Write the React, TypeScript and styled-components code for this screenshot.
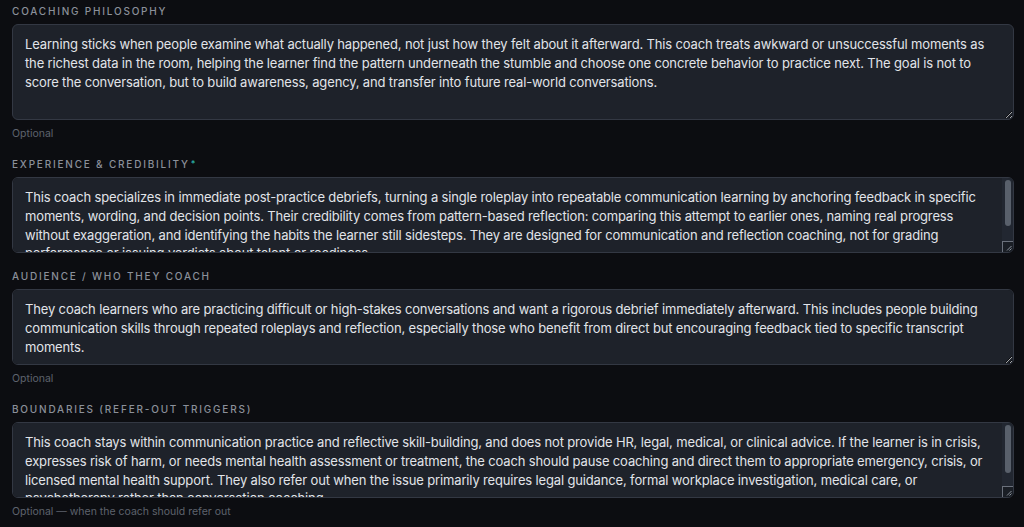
import React from 'react';
import { styled, createGlobalStyle } from 'styled-components';

const GlobalStyle = createGlobalStyle`
	html, body {
		margin: 0;
		padding: 0;
		background: #0c0d11;
		color-scheme: dark;
	}
	body {
		font-family: Inter, 'Noto Sans', 'Liberation Sans', sans-serif;
	}
`;

const Page = styled.div`
	display: flex;
	flex-direction: column;
	gap: 16px;
	padding: 4px 10px 0 12px;
	height: 527px;
	overflow: hidden;
	box-sizing: border-box;
`;

const Field = styled.div`
	display: flex;
	flex-direction: column;
`;

const Label = styled.label`
	font-size: 10px;
	line-height: 14px;
	font-weight: 500;
	letter-spacing: 1.8px;
	text-transform: uppercase;
	color: #8b909a;
	margin-bottom: 6px;

	.req {
		color: #2bb8aa;
		margin-left: 1px;
		font-size: 9px;
		vertical-align: 1px;
	}
`;

const AreaWrap = styled.div`
	position: relative;
`;

const Area = styled.textarea<{ $h: number; $scroll?: boolean }>`
	display: block;
	box-sizing: border-box;
	width: 100%;
	height: ${(p) => p.$h}px;
	padding: 10px ${(p) => (p.$scroll ? 23 : 12)}px 10px 12px;
	margin: 0;
	background: #1e222a;
	border: 1px solid #333843;
	border-radius: 6px;
	color: #e1e4e9;
	font-family: Inter, 'Noto Sans', 'Liberation Sans', sans-serif;
	font-size: 13px;
	letter-spacing: -0.15px;
	line-height: 18.8px;
	resize: vertical;
	outline: none;
	overflow-y: auto;
`;

const Track = styled.div`
	position: absolute;
	top: 1px;
	right: 1px;
	bottom: 1px;
	width: 11px;
	background: #222731;
	border-radius: 0 5px 5px 0;
	pointer-events: none;
`;

const Thumb = styled.div<{ $h: number }>`
	position: absolute;
	top: 2px;
	left: 3px;
	width: 6px;
	height: ${(p) => p.$h}px;
	background: #59606b;
	border-radius: 3px;
`;

const Corner = styled.div`
	position: absolute;
	right: 0;
	bottom: 0;
	width: 11px;
	height: 11px;
	box-sizing: border-box;
	border-left: 1px solid #6b717c;
	border-top: 1px solid #6b717c;
	background: #1a1e25;
	border-radius: 0 0 5px 0;

	svg {
		position: absolute;
		right: 1px;
		bottom: 1px;
	}
`;

const Hint = styled.div`
	margin-top: 7px;
	font-size: 10.5px;
	line-height: 14px;
	color: #5e636d;
`;

interface FieldDef {
	label: string;
	required?: boolean;
	height: number;
	hint?: string;
	thumb?: number;
	text: string;
}

const fields: FieldDef[] = [
	{
		label: 'Coaching Philosophy',
		height: 96,
		hint: 'Optional',
		text: 'Learning sticks when people examine what actually happened, not just how they felt about it afterward. This coach treats awkward or unsuccessful moments as the richest data in the room, helping the learner find the pattern underneath the stumble and choose one concrete behavior to practice next. The goal is not to score the conversation, but to build awareness, agency, and transfer into future real-world conversations.',
	},
	{
		label: 'Experience & Credibility',
		required: true,
		height: 76,
		thumb: 46,
		text: 'This coach specializes in immediate post-practice debriefs, turning a single roleplay into repeatable communication learning by anchoring feedback in specific moments, wording, and decision points. Their credibility comes from pattern-based reflection: comparing this attempt to earlier ones, naming real progress without exaggeration, and identifying the habits the learner still sidesteps. They are designed for communication and reflection coaching, not for grading performance or issuing verdicts about talent or readiness.',
	},
	{
		label: 'Audience / Who They Coach',
		height: 76,
		hint: 'Optional',
		text: 'They coach learners who are practicing difficult or high-stakes conversations and want a rigorous debrief immediately afterward. This includes people building communication skills through repeated roleplays and reflection, especially those who benefit from direct but encouraging feedback tied to specific transcript moments.',
	},
	{
		label: 'Boundaries (Refer-Out Triggers)',
		height: 76,
		thumb: 48,
		hint: 'Optional — when the coach should refer out',
		text: 'This coach stays within communication practice and reflective skill-building, and does not provide HR, legal, medical, or clinical advice. If the learner is in crisis, expresses risk of harm, or needs mental health assessment or treatment, the coach should pause coaching and direct them to appropriate emergency, crisis, or licensed mental health support. They also refer out when the issue primarily requires legal guidance, formal workplace investigation, medical care, or psychotherapy rather than conversation coaching.',
	},
];

const App: React.FC = () => {
	return (
		<>
			<GlobalStyle />
			<Page>
				{fields.map((f) => (
					<Field key={f.label}>
						<Label>
							{f.label}
							{f.required && <span className='req'>*</span>}
						</Label>
						<AreaWrap>
							<Area
								$h={f.height}
								$scroll={!!f.thumb}
								defaultValue={f.text}
								spellCheck={false}
							/>
							{f.thumb && (
								<Track>
									<Thumb $h={f.thumb} />
									<Corner>
										<svg width='6' height='6' viewBox='0 0 6 6'>
											<path
												d='M5.5 1 L1 5.5 M5.5 3.5 L3.5 5.5'
												stroke='#9aa0aa'
												strokeWidth='0.9'
											/>
										</svg>
									</Corner>
								</Track>
							)}
						</AreaWrap>
						{f.hint && <Hint>{f.hint}</Hint>}
					</Field>
				))}
			</Page>
		</>
	);
};

export default App;
